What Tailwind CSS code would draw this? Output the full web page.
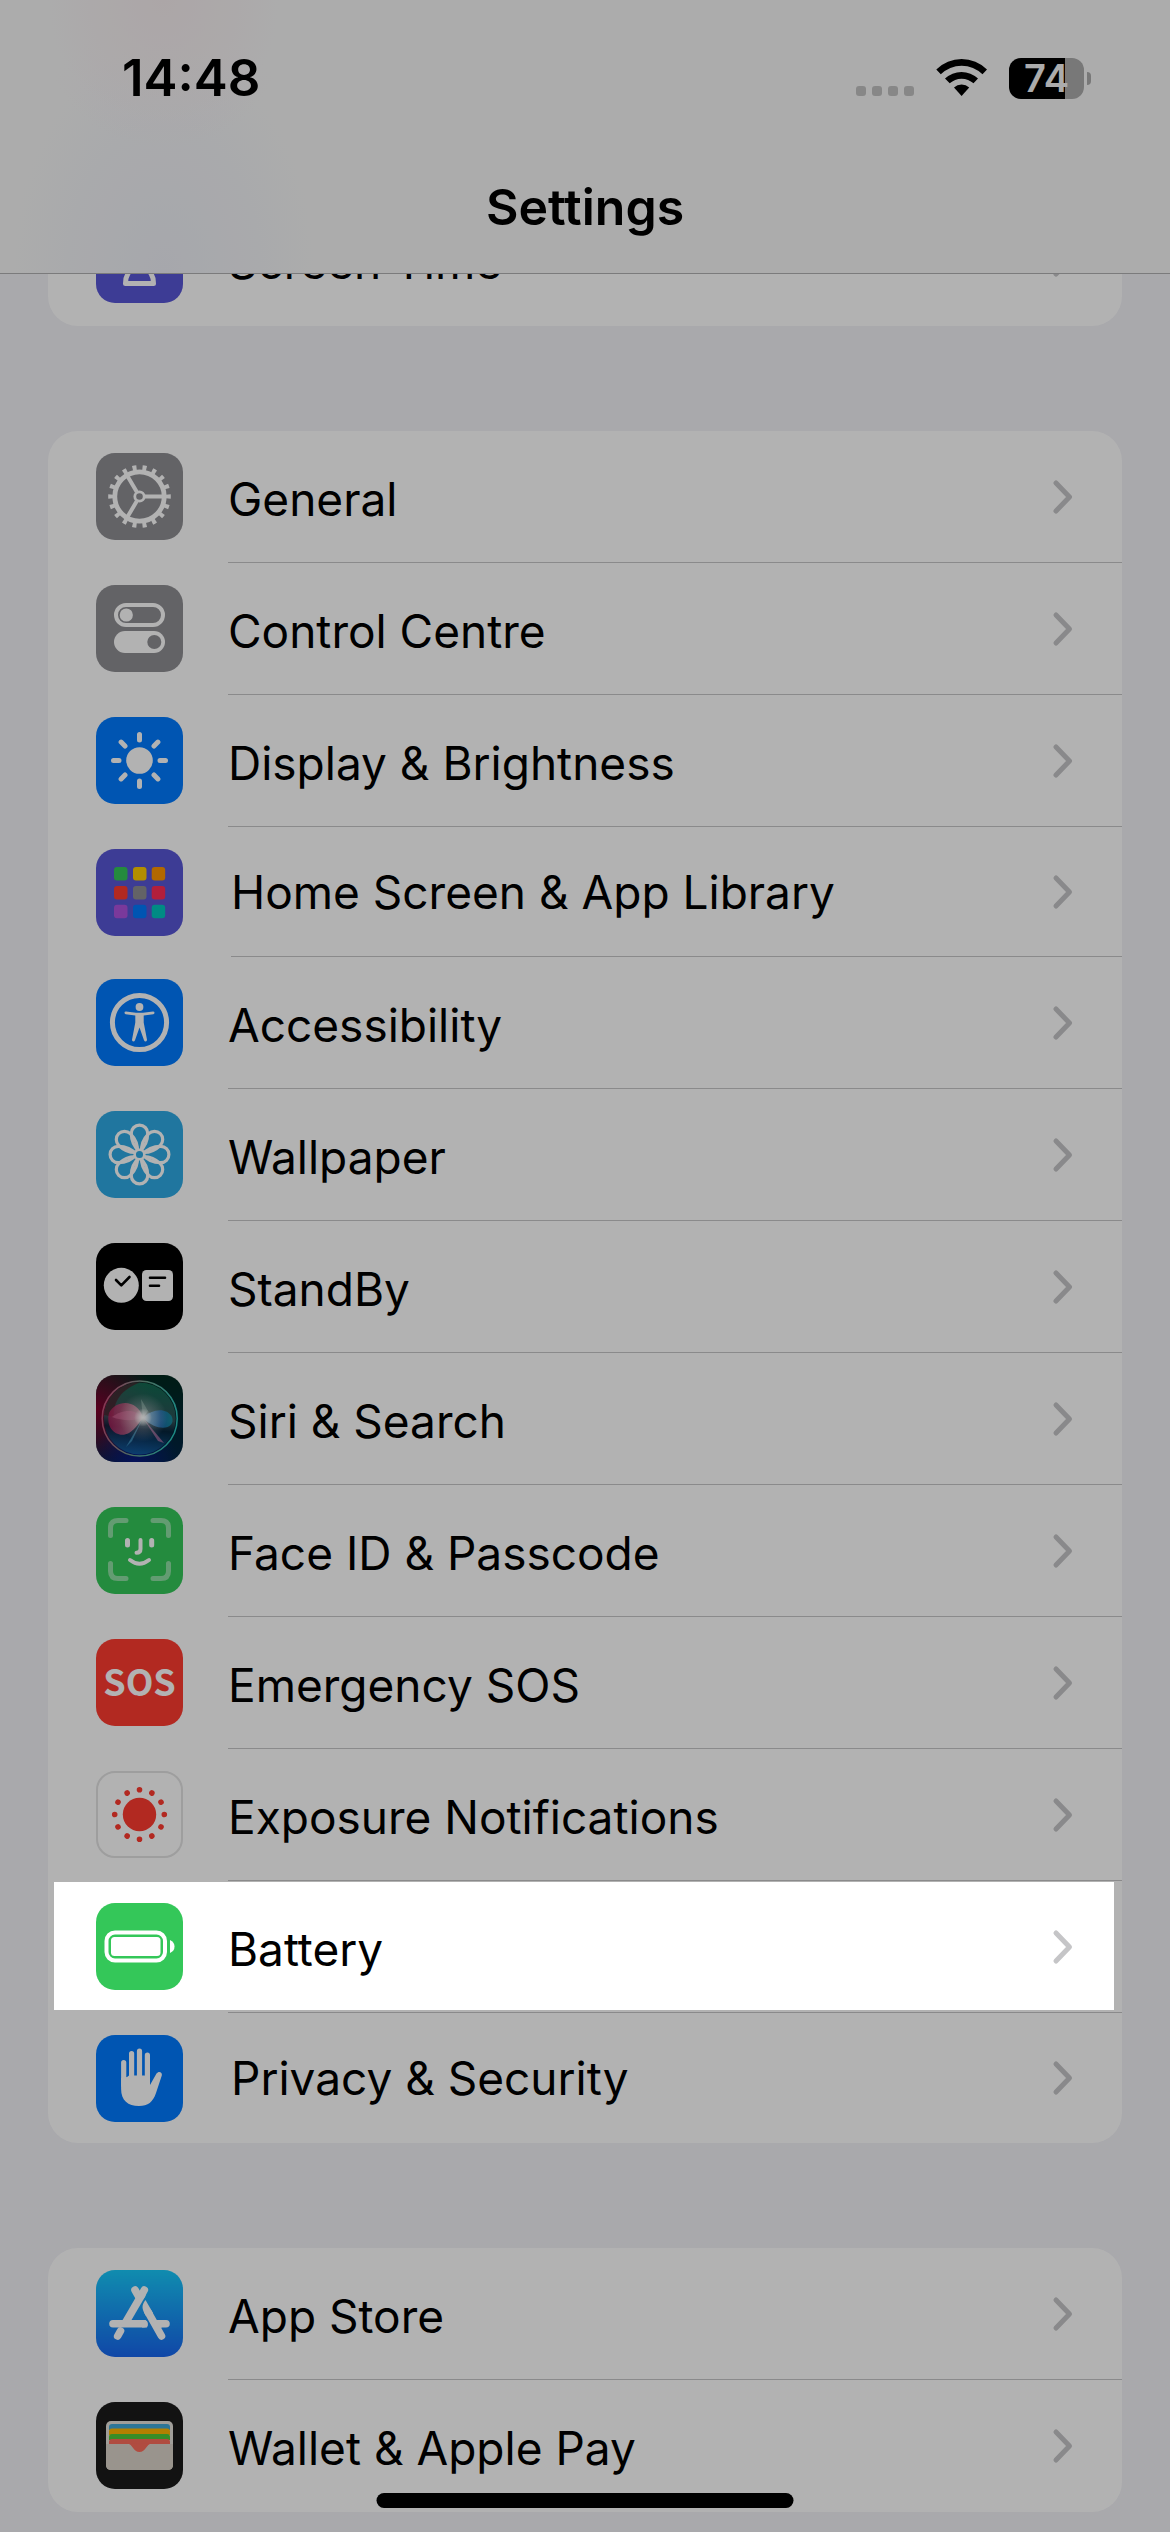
<!DOCTYPE html>
<html lang="en">
  <head>
    <meta charset="UTF-8" />
    <meta name="viewport" content="width=device-width, initial-scale=1.0" />
    <title>Settings</title>
    <script src="https://cdn.jsdelivr.net/npm/@tailwindcss/browser@4"></script>
  </head>
  <body class="min-h-screen bg-[#f2f2f7] font-['Inter','Liberation_Sans',sans-serif] text-black overflow-x-hidden">
    <svg class="hidden">
      <symbol id="chevron" viewBox="0 0 22 36">
        <path d="M4 4L17.500 18L4 32" fill="none" stroke="currentColor" stroke-width="5" stroke-linecap="round" stroke-linejoin="round" />
      </symbol>
    </svg>

    <header
      class="fixed inset-x-0 top-0 z-10 border-b border-[#b0b0b2] bg-[#f7f7f7] bg-[radial-gradient(ellipse_130px_150px_at_14%_0,#f6eef0,transparent),radial-gradient(ellipse_170px_260px_at_14%_100%,#eef0f6,transparent)]"
    >
      <div class="flex h-[156px] items-center justify-between pl-[122px] pr-[79px]">
        <time class="text-[51px] leading-[60px] font-semibold">14:48</time>
        <div class="flex items-center">
          <svg class="h-[42px] w-[131px]" viewBox="0 0 131 42">
            <g fill="#c2c2c2">
              <rect x="0" y="29" width="10" height="10" rx="3" />
              <rect x="16" y="29" width="10" height="10" rx="3" />
              <rect x="32" y="29" width="10" height="10" rx="3" />
              <rect x="48" y="29" width="10" height="10" rx="3" />
            </g>
            <path d="M80.300 12.500A36 36 0 0 1 131 12.500L126.500 17.300A29.500 29.500 0 0 0 84.800 17.300Z" />
            <path d="M89 21.500A24 24 0 0 1 122 21.500L117.500 26.300A17.500 17.500 0 0 0 93.700 26.300Z" />
            <path d="M98 30.500A11 11 0 0 1 113.200 30.500L105.600 39Z" />
          </svg>
          <div class="ml-[22px] flex h-[41px] w-[75px] items-center justify-center rounded-xl bg-[linear-gradient(to_right,#000_75%,#acacac_75%)]">
            <span class="text-[38px] leading-[41px] font-semibold text-[#f7f7f7]">74</span>
          </div>
          <div class="ml-[3px] h-[13px] w-1 rounded-r-full bg-[#acacac]"></div>
        </div>
      </div>
      <h1 class="h-[117px] pt-[21px] text-center text-[50px] leading-[60px] font-semibold">Settings</h1>
    </header>

    <main class="flex flex-col gap-[105px] px-12 pt-[194px] pb-5 text-[46px] leading-[60px]">
      <ul class="rounded-[30px] bg-white">
        <li>
          <a href="#" class="flex h-[132px] items-center pl-12">
            <svg class="mb-px size-[87px]" viewBox="0 0 87 87">
              <rect width="87" height="87" rx="19" fill="#5856d6" />
              <path d="M43.500 44C39 53 29.500 54 29.500 67.500H57.500C57.500 54 48 53 43.500 44ZM43.500 43C39 34 29.500 33 29.500 19.500H57.500C57.500 33 48 34 43.500 43Z" fill="none" stroke="#fff" stroke-width="5" stroke-linejoin="round" />
            </svg>
            <span class="ml-[45px] flex flex-1 items-center justify-between pr-[48px]">
              <span class="pt-1">Screen Time</span>
              <svg class="h-9 w-[22px] text-[#c5c5c7]"><use href="#chevron" /></svg>
            </span>
          </a>
        </li>
      </ul>

      <ul class="rounded-[30px] bg-white">
        <li>
          <a href="#" class="flex h-[132px] items-center pl-12">
            <svg class="mb-px size-[87px]" viewBox="0 0 87 87">
              <rect width="87" height="87" rx="19" fill="#8e8e93" />
              <g fill="none" stroke="#fff">
                <circle cx="43.500" cy="43.500" r="24.700" stroke-width="4.800" />
                <circle cx="43.500" cy="43.500" r="28.800" stroke-width="5" pathLength="180" stroke-dasharray="4 6" stroke-dashoffset="2" />
                <path d="M49 43.500H67M40.700 48.300L31.700 63.500M40.700 38.700L31.700 23.500" stroke-width="4" />
                <circle cx="43.500" cy="43.500" r="4.700" stroke-width="2.800" />
              </g>
            </svg>
            <span class="ml-[45px] flex flex-1 items-center justify-between self-stretch border-b border-[#c6c6c8] pr-[48px]">
              <span class="pt-1">General</span>
              <svg class="h-9 w-[22px] text-[#c5c5c7]"><use href="#chevron" /></svg>
            </span>
          </a>
        </li>
        <li>
          <a href="#" class="flex h-[132px] items-center pl-12">
            <svg class="mb-px size-[87px]" viewBox="0 0 87 87">
              <rect width="87" height="87" rx="19" fill="#8e8e93" />
              <rect x="20" y="20" width="47" height="20" rx="10" fill="none" stroke="#fff" stroke-width="4" />
              <circle cx="30.300" cy="30" r="6.600" fill="#fff" />
              <rect x="18" y="46" width="51" height="22" rx="11" fill="#fff" />
              <circle cx="58.300" cy="57" r="7" fill="#8e8e93" />
            </svg>
            <span class="ml-[45px] flex flex-1 items-center justify-between self-stretch border-b border-[#c6c6c8] pr-[48px]">
              <span class="pt-1">Control Centre</span>
              <svg class="h-9 w-[22px] text-[#c5c5c7]"><use href="#chevron" /></svg>
            </span>
          </a>
        </li>
        <li>
          <a href="#" class="flex h-[132px] items-center pl-12">
            <svg class="mb-px size-[87px]" viewBox="0 0 87 87">
              <rect width="87" height="87" rx="19" fill="#007aff" />
              <circle cx="43.500" cy="43.500" r="13.300" fill="#fff" />
              <path
                d="M43.500 17.500V23M43.500 64V69.500M17.500 43.500H23M64 43.500H69.500M25.100 25.100L29 29M58 58L61.900 61.900M25.100 61.900L29 58M58 29L61.900 25.100"
                stroke="#fff" stroke-width="5" stroke-linecap="round"
              />
            </svg>
            <span class="ml-[45px] flex flex-1 items-center justify-between self-stretch border-b border-[#c6c6c8] pr-[48px]">
              <span class="pt-1">Display &amp; Brightness</span>
              <svg class="h-9 w-[22px] text-[#c5c5c7]"><use href="#chevron" /></svg>
            </span>
          </a>
        </li>
        <li>
          <a href="#" class="flex h-[130px] items-center pl-12">
            <svg class="mt-px size-[87px]" viewBox="0 0 87 87">
              <rect width="87" height="87" rx="19" fill="#5856d6" />
              <rect x="18" y="18" width="13.500" height="13.500" rx="3" fill="#34c759" />
              <rect x="37" y="18" width="13.500" height="13.500" rx="3" fill="#ffcc00" />
              <rect x="55.700" y="18" width="13.500" height="13.500" rx="3" fill="#ff9500" />
              <rect x="18" y="37" width="13.500" height="13.500" rx="3" fill="#ff3b30" />
              <rect x="37" y="37" width="13.500" height="13.500" rx="3" fill="#8e8e93" />
              <rect x="55.700" y="37" width="13.500" height="13.500" rx="3" fill="#ff2d55" />
              <rect x="18" y="55.700" width="13.500" height="13.500" rx="3" fill="#af52de" />
              <rect x="37" y="55.700" width="13.500" height="13.500" rx="3" fill="#007aff" />
              <rect x="55.700" y="55.700" width="13.500" height="13.500" rx="3" fill="#00c7be" />
            </svg>
            <span class="ml-12 flex flex-1 items-center justify-between self-stretch border-b border-[#c6c6c8] pr-[48px]">
              <span>Home Screen &amp; App Library</span>
              <svg class="h-9 w-[22px] text-[#c5c5c7]"><use href="#chevron" /></svg>
            </span>
          </a>
        </li>
        <li>
          <a href="#" class="flex h-[132px] items-center pl-12">
            <svg class="mb-px size-[87px]" viewBox="0 0 87 87">
              <rect width="87" height="87" rx="19" fill="#007aff" />
              <circle cx="43.500" cy="43.500" r="27.100" fill="none" stroke="#fff" stroke-width="5" />
              <circle cx="43.500" cy="28" r="3.900" fill="#fff" />
              <path
                d="M30 32.600L40 33.800H47L57 32.600Q58.700 32.700 58.500 34Q58.300 35 57.300 35.200L47.700 36.500V43.500L51 60.800Q51 62.400 49.700 62.500Q48.500 62.500 48 61.300L43.500 48.500L39 61.300Q38.500 62.500 37.300 62.500Q36 62.400 36 60.800L39.300 43.500V36.500L29.700 35.200Q28.700 35 28.500 34Q28.300 32.700 30 32.600Z"
                fill="#fff"
              />
            </svg>
            <span class="ml-[45px] flex flex-1 items-center justify-between self-stretch border-b border-[#c6c6c8] pr-[48px]">
              <span class="pt-1">Accessibility</span>
              <svg class="h-9 w-[22px] text-[#c5c5c7]"><use href="#chevron" /></svg>
            </span>
          </a>
        </li>
        <li>
          <a href="#" class="flex h-[132px] items-center pl-12">
            <svg class="mb-px size-[87px]" viewBox="0 0 87 87">
              <defs>
                <path id="petal" d="M0 -3C-6 -8 -8.200 -14 -8.200 -21.200A8.200 8.200 0 0 1 8.200 -21.200C8.200 -14 6 -8 0 -3Z" />
              </defs>
              <rect width="87" height="87" rx="19" fill="#2eaae4" />
              <g transform="translate(43.500 43.500)" fill="none" stroke="#fff" stroke-width="3.200">
                <use href="#petal" />
                <use href="#petal" transform="rotate(45)" />
                <use href="#petal" transform="rotate(90)" />
                <use href="#petal" transform="rotate(135)" />
                <use href="#petal" transform="rotate(180)" />
                <use href="#petal" transform="rotate(225)" />
                <use href="#petal" transform="rotate(270)" />
                <use href="#petal" transform="rotate(315)" />
                <circle r="4.800" fill="#2eaae4" stroke-width="2.500" />
              </g>
            </svg>
            <span class="ml-[45px] flex flex-1 items-center justify-between self-stretch border-b border-[#c6c6c8] pr-[48px]">
              <span class="pt-1">Wallpaper</span>
              <svg class="h-9 w-[22px] text-[#c5c5c7]"><use href="#chevron" /></svg>
            </span>
          </a>
        </li>
        <li>
          <a href="#" class="flex h-[132px] items-center pl-12">
            <svg class="mb-px size-[87px]" viewBox="0 0 87 87">
              <rect width="87" height="87" rx="19" />
              <circle cx="25.300" cy="42.300" r="17.500" fill="#fff" />
              <rect x="46" y="27" width="31" height="31" rx="4.500" fill="#fff" />
              <path d="M20 37L25.300 42.300L33.500 34M54 34.700H69M54 42.700H63" fill="none" stroke="#000" stroke-width="2.600" stroke-linecap="round" stroke-linejoin="round" />
            </svg>
            <span class="ml-[45px] flex flex-1 items-center justify-between self-stretch border-b border-[#c6c6c8] pr-[48px]">
              <span class="pt-1">StandBy</span>
              <svg class="h-9 w-[22px] text-[#c5c5c7]"><use href="#chevron" /></svg>
            </span>
          </a>
        </li>
        <li>
          <a href="#" class="flex h-[132px] items-center pl-12">
            <svg class="mb-px size-[87px]" viewBox="0 0 87 87">
              <defs>
                <radialGradient id="siri-red" cx="0" cy=".4" r=".7">
                  <stop stop-color="#80002c" />
                  <stop offset="1" stop-color="#80002c" stop-opacity="0" />
                </radialGradient>
                <radialGradient id="siri-blue" cx=".45" cy="1" r=".5">
                  <stop stop-color="#0a1a80" />
                  <stop offset="1" stop-color="#0a1a80" stop-opacity="0" />
                </radialGradient>
                <linearGradient id="siri-back" x1="1" y1="0" x2="1" y2="1">
                  <stop stop-color="#00281e" />
                  <stop offset="1" stop-color="#002444" />
                </linearGradient>
                <linearGradient id="siri-orb" x1=".6" y1="0" x2=".5" y2="1">
                  <stop stop-color="#147a5c" />
                  <stop offset=".5" stop-color="#3a5a60" />
                  <stop offset=".65" stop-color="#06243c" />
                  <stop offset="1" stop-color="#1468a8" />
                </linearGradient>
                <linearGradient id="siri-ring" x1="0" y1=".4" x2="1" y2=".6">
                  <stop stop-color="#c05078" />
                  <stop offset=".5" stop-color="#6aa08c" />
                  <stop offset="1" stop-color="#28c8c0" />
                </linearGradient>
                <linearGradient id="siri-pink" x1="0" y1="0" x2="1" y2="0">
                  <stop stop-color="#b81c5c" />
                  <stop offset="1" stop-color="#e898ac" />
                </linearGradient>
                <linearGradient id="siri-cyan" x1="0" y1="0" x2="1" y2="0">
                  <stop stop-color="#88c8f0" />
                  <stop offset=".6" stop-color="#1c70c0" />
                  <stop offset="1" stop-color="#1098a8" />
                </linearGradient>
                <radialGradient id="siri-core">
                  <stop stop-color="#fff" />
                  <stop offset=".25" stop-color="#fff" stop-opacity=".85" />
                  <stop offset="1" stop-color="#fff" stop-opacity="0" />
                </radialGradient>
              </defs>
              <rect width="87" height="87" rx="19" fill="url(#siri-back)" />
              <rect width="87" height="87" rx="19" fill="url(#siri-red)" />
              <rect width="87" height="87" rx="19" fill="url(#siri-blue)" />
              <circle cx="43.700" cy="43.400" r="36" fill="url(#siri-orb)" opacity=".8" />
              <path d="M8 40A36 36 0 0 1 44 7.500C26 14 17 26 18 42Z" fill="#4a1c28" opacity=".7" />
              <path d="M47 43C42 24 20 24 13 38C9 54 22 64 33 58C40 54 43 47 47 43Z" fill="url(#siri-pink)" opacity=".75" />
              <path d="M47 43C38 32 24 36 16 42C26 46 38 46 47 43Z" fill="#e070a0" opacity=".5" />
              <path d="M47 43C56 34 70 32 76 42C80 54 62 58 47 43Z" fill="url(#siri-cyan)" opacity=".8" />
              <path d="M47 43L30 72L36 66Z" fill="#60c8f0" opacity=".5" />
              <path d="M47 43L68 68L62 66Z" fill="#d880b8" opacity=".6" />
              <path d="M47 43L45 24L52 36Z" fill="#b0d8c8" opacity=".4" />
              <circle cx="47" cy="42.500" r="24" fill="url(#siri-core)" opacity=".4" />
              <circle cx="47" cy="42.500" r="9" fill="url(#siri-core)" />
              <circle cx="43.700" cy="43.400" r="37.500" fill="none" stroke="url(#siri-ring)" stroke-width="1.500" />
            </svg>
            <span class="ml-[45px] flex flex-1 items-center justify-between self-stretch border-b border-[#c6c6c8] pr-[48px]">
              <span class="pt-1">Siri &amp; Search</span>
              <svg class="h-9 w-[22px] text-[#c5c5c7]"><use href="#chevron" /></svg>
            </span>
          </a>
        </li>
        <li>
          <a href="#" class="flex h-[132px] items-center pl-12">
            <svg class="mb-px size-[87px]" viewBox="0 0 87 87">
              <rect width="87" height="87" rx="19" fill="#34c759" />
              <g fill="none" stroke="#fff" stroke-linecap="round">
                <path
                  d="M14.500 28.500V21Q14.500 13.500 22 13.500H30M57 13.500H65Q72.500 13.500 72.500 21V28.500M72.500 56.500V64Q72.500 71.500 65 71.500H57M30 71.500H22Q14.500 71.500 14.500 64V56.500"
                  stroke-width="5" stroke-opacity=".45"
                />
                <path d="M31.500 33.500V38M55.700 33.500V38" stroke-width="5" />
                <path d="M44.500 33V42Q44.500 45.800 40.500 45.800M34 53Q43.500 60.500 53 53" stroke-width="4" />
              </g>
            </svg>
            <span class="ml-[45px] flex flex-1 items-center justify-between self-stretch border-b border-[#c6c6c8] pr-[48px]">
              <span class="pt-1">Face ID &amp; Passcode</span>
              <svg class="h-9 w-[22px] text-[#c5c5c7]"><use href="#chevron" /></svg>
            </span>
          </a>
        </li>
        <li>
          <a href="#" class="flex h-[132px] items-center pl-12">
            <svg class="mb-px size-[87px]" viewBox="0 0 87 87">
              <rect width="87" height="87" rx="19" fill="#ff3b30" />
              <text x="43.500" y="57" text-anchor="middle" fill="#fff" class="font-['Noto_Sans_CJK_SC','Roboto',sans-serif] text-[36px] font-bold">SOS</text>
            </svg>
            <span class="ml-[45px] flex flex-1 items-center justify-between self-stretch border-b border-[#c6c6c8] pr-[48px]">
              <span class="pt-1">Emergency SOS</span>
              <svg class="h-9 w-[22px] text-[#c5c5c7]"><use href="#chevron" /></svg>
            </span>
          </a>
        </li>
        <li>
          <a href="#" class="flex h-[132px] items-center pl-12">
            <svg class="mb-px size-[87px]" viewBox="0 0 87 87">
              <rect x="1" y="1" width="85" height="85" rx="18" fill="#fff" stroke="#e2e2e3" stroke-width="2" />
              <circle cx="43.500" cy="43.500" r="16.700" fill="#ff3b30" />
              <circle cx="43.500" cy="43.500" r="24.800" fill="none" stroke="#ff3b30" stroke-width="5.600" stroke-linecap="round" pathLength="12" stroke-dasharray="0.001 0.999" />
            </svg>
            <span class="ml-[45px] flex flex-1 items-center justify-between self-stretch border-b border-[#c6c6c8] pr-[48px]">
              <span class="pt-1">Exposure Notifications</span>
              <svg class="h-9 w-[22px] text-[#c5c5c7]"><use href="#chevron" /></svg>
            </span>
          </a>
        </li>
        <li class="relative">
          <a href="#" class="flex h-[132px] items-center pl-12">
            <svg class="mb-px size-[87px]" viewBox="0 0 87 87">
              <rect width="87" height="87" rx="19" fill="#34c759" />
              <rect x="10.500" y="29.500" width="58.500" height="28" rx="8.500" fill="none" stroke="#fff" stroke-width="4" />
              <rect x="15" y="34" width="49.500" height="19" rx="3.500" fill="#fff" />
              <path d="M74 37Q78.500 39 78.500 43.500T74 50Z" fill="#fff" />
            </svg>
            <span class="ml-[45px] flex flex-1 items-center justify-between self-stretch border-b border-[#c6c6c8] pr-[48px]">
              <span class="pt-1">Battery</span>
              <svg class="h-9 w-[22px] text-[#c5c5c7]"><use href="#chevron" /></svg>
            </span>
          </a>
          <!-- spotlight: its shadow dims everything outside this row -->
          <div class="pointer-events-none absolute top-px right-2 bottom-[3px] left-[6px] z-20 shadow-[0_0_0_3000px_rgba(0,0,0,0.3)]"></div>
        </li>
        <li>
          <a href="#" class="flex h-[130px] items-center pl-12">
            <svg class="mt-px size-[87px]" viewBox="0 0 87 87">
              <rect width="87" height="87" rx="19" fill="#007aff" />
              <path d="M27.700 27.500V50M35.600 18.500V50M43.500 16.200V50M51.400 20.200V50" stroke="#fff" stroke-width="5.200" stroke-linecap="round" />
              <path d="M25.100 43L31 42L33 40.500H48L54 41V50L60.500 38.500C62.500 35.500 66.700 37 65.800 40.500L60 58C57 67 52 71 43 71C32 71 25.100 65.500 25.100 54Z" fill="#fff" />
            </svg>
            <span class="ml-12 flex flex-1 items-center justify-between pr-[48px]">
              <span>Privacy &amp; Security</span>
              <svg class="h-9 w-[22px] text-[#c5c5c7]"><use href="#chevron" /></svg>
            </span>
          </a>
        </li>
      </ul>

      <ul class="rounded-[30px] bg-white">
        <li>
          <a href="#" class="flex h-[132px] items-center pl-12">
            <svg class="mb-px size-[87px]" viewBox="0 0 87 87">
              <defs>
                <linearGradient id="store" x1="0" y1="0" x2="0" y2="1">
                  <stop stop-color="#18c9fb" />
                  <stop offset="1" stop-color="#1866f0" />
                </linearGradient>
              </defs>
              <rect width="87" height="87" rx="19" fill="url(#store)" />
              <g fill="none" stroke="#fff" stroke-width="7.600">
                <path d="M39 20L43 27M65.500 66L52 42" stroke-linecap="round" />
                <path d="M48.300 20L45 26M65 53.800H70" stroke-linecap="round" />
                <path d="M46.500 23.500L29 53.500" />
                <path d="M17 53.800H48" stroke-linecap="round" />
                <path d="M24.500 61L21.700 66" stroke-linecap="round" />
              </g>
              <path d="M49.500 30L57 43L50 46C46 39 45 36 49.500 30ZM46 50H49.500Q53 54 51 57.600H46ZM59 50H66V57.600H62Z" fill="#fff" />
            </svg>
            <span class="ml-[45px] flex flex-1 items-center justify-between self-stretch border-b border-[#c6c6c8] pr-[48px]">
              <span class="pt-1">App Store</span>
              <svg class="h-9 w-[22px] text-[#c5c5c7]"><use href="#chevron" /></svg>
            </span>
          </a>
        </li>
        <li>
          <a href="#" class="flex h-[132px] items-center pl-12">
            <svg class="mb-px size-[87px]" viewBox="0 0 87 87">
              <rect width="87" height="87" rx="19" fill="#1a1a1a" />
              <rect x="10" y="19" width="67" height="49" rx="5" fill="#e6e2dc" />
              <path d="M13 28V25Q13 22 16 22H71Q74 22 74 25V28Z" fill="#3fa9d8" />
              <path d="M13 33V29.500Q13 26.500 16 26.500H71Q74 26.500 74 29.500V33Z" fill="#ffb800" />
              <path d="M13 38V35Q13 32 16 32H71Q74 32 74 35V38Z" fill="#4fcb38" />
              <path d="M13 42V40Q13 37 16 37H71Q74 37 74 40V42Z" fill="#fd6d5c" />
              <path d="M10 42H31C37 42 37 50 43.500 50S50 42 56 42H77V63Q77 68 72 68H15Q10 68 10 63Z" fill="#dcd5ca" />
              <path d="M31 41.500C37 42 37 50 43.500 50S50 42 56 41.500Z" fill="#fd6d5c" />
            </svg>
            <span class="ml-[45px] flex flex-1 items-center justify-between pr-[48px]">
              <span class="pt-1">Wallet &amp; Apple Pay</span>
              <svg class="h-9 w-[22px] text-[#c5c5c7]"><use href="#chevron" /></svg>
            </span>
          </a>
        </li>
      </ul>
    </main>

    <!-- home indicator -->
    <div class="fixed bottom-6 left-1/2 z-10 h-[15px] w-[417px] -translate-x-1/2 rounded-full bg-black"></div>
  </body>
</html>
